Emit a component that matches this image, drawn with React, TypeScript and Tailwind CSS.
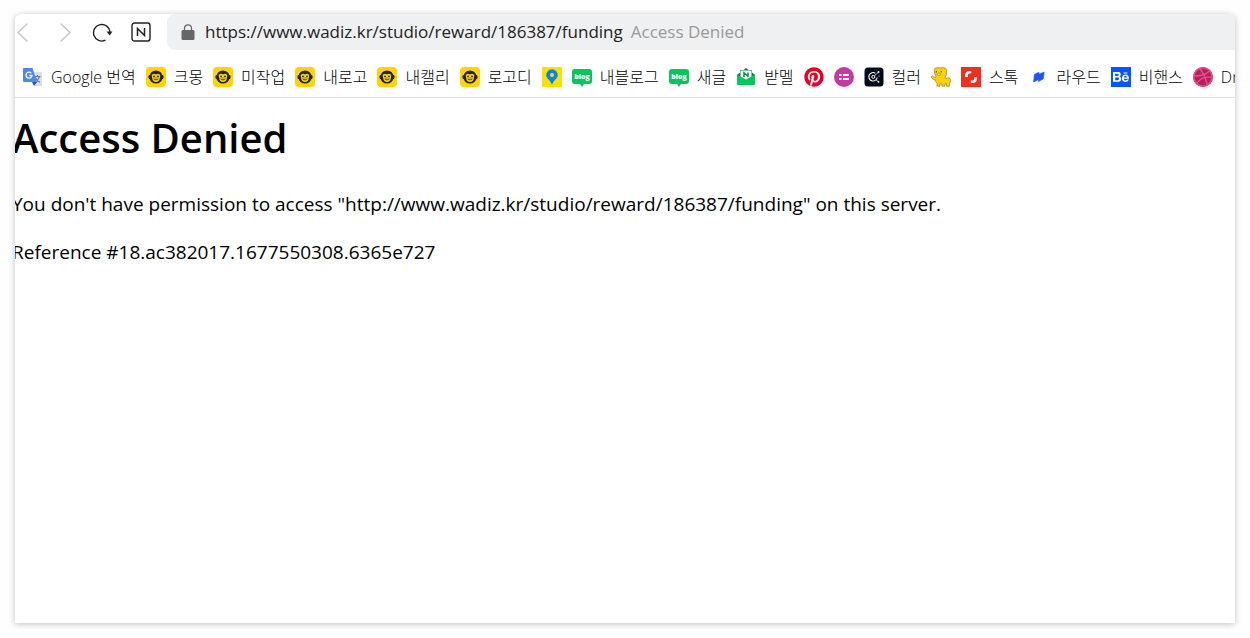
import type { ReactNode } from "react";
import { FaBehance, FaDribbble, FaPinterest } from "react-icons/fa";

interface Bookmark {
  id: string;
  title: string;
  label?: string;
  icon: ReactNode;
}

const URL = "https://www.wadiz.kr/studio/reward/186387/funding";

function TranslateIcon() {
  return (
    <svg viewBox="0 0 20 20" className="size-5">
      <path d="M8 5h10q1 0 1 1v12q0 1-1 1h-6z" fill="#dcdee0" />
      <path d="M11.5 9.5h6M14.5 8v1.5M12.5 15.5c2-1.5 3.4-3.5 3.9-6M12.5 10.5c.8 2 2.3 3.7 4.5 4.8" fill="none" stroke="#607d8b" strokeWidth="1.2" />
      <path d="M9 15h5l-3 4z" fill="#2946c9" />
      <path d="M1 1h8.5L14 15H1q-1 0-1-1V2q0-1 1-1z" fill="#4c86ee" />
      <path d="M8.3 6.2A3 3 0 1 0 9 8.5H6.2" fill="none" stroke="#fff" strokeWidth="1.3" />
    </svg>
  );
}

function MonkeyIcon() {
  return (
    <svg viewBox="0 0 20 20" className="size-5">
      <rect width="20" height="20" rx="4" fill="#ffd400" />
      <circle cx="4.5" cy="10" r="2.2" fill="#222" />
      <circle cx="15.5" cy="10" r="2.2" fill="#222" />
      <circle cx="10" cy="10" r="6.6" fill="#222" />
      <path d="M10 7.5C8 5.8 5.4 7 5.8 9.4c.1.8.5 1.2.5 2 0 2 1.7 3.5 3.7 3.5s3.7-1.5 3.7-3.5c0-.8.4-1.2.5-2C14.6 7 12 5.8 10 7.5z" fill="#ffd400" />
      <circle cx="8" cy="9.4" r="0.9" fill="#222" />
      <circle cx="12" cy="9.4" r="0.9" fill="#222" />
      <path d="M7.7 11.8q2.3 2.4 4.6 0M9.5 10.9h1" fill="none" stroke="#222" strokeWidth="0.9" />
    </svg>
  );
}

function MapIcon() {
  return (
    <svg viewBox="0 0 20 20" className="size-5">
      <rect width="20" height="20" fill="#fae100" />
      <path d="M10 2.3a5.8 5.8 0 0 0-5.8 5.8c0 3.5 3.8 4.6 5.8 9.7 2-5.1 5.8-6.2 5.8-9.7A5.8 5.8 0 0 0 10 2.3z" fill="#0a80f5" />
      <circle cx="10" cy="8" r="2" fill="#fae100" />
    </svg>
  );
}

function BlogIcon() {
  return (
    <svg viewBox="0 0 20 20" className="size-5">
      <path d="M3 2h14q3 0 3 3v9q0 3-3 3h-5l-2 3-2-3H3q-3 0-3-3V5q0-3 3-3z" fill="#03c75a" />
      <text x="10" y="11.5" textAnchor="middle" fontSize="7" fontWeight="800" fontFamily="Open Sans, sans-serif" fill="#fff">
        blog
      </text>
    </svg>
  );
}

function MailIcon() {
  return (
    <svg viewBox="0 0 20 20" className="size-5">
      <path d="M1 8l3-2.5V4q0-1 1-1h2.5L10 1l2.5 2H15q1 0 1 1v1.5L19 8v3H1z" fill="#087f3e" />
      <path d="M4.5 4.5q0-1 1-1h9q1 0 1 1V13h-11z" fill="#fff" />
      <path d="M8 10V5.8l4 3.4M12 10V5.5" fill="none" stroke="#078a43" strokeWidth="1.5" />
      <path d="M1 7.5l9 5 9-5V17q0 1-1 1H2q-1 0-1-1z" fill="#03c75a" />
    </svg>
  );
}

function PinterestIcon() {
  return (
    <span className="block size-5 rounded-full bg-white">
      <FaPinterest className="size-5 text-[#e60023]" />
    </span>
  );
}

function ListIcon() {
  return (
    <svg viewBox="0 0 20 20" className="size-5">
      <circle cx="10" cy="10" r="10" fill="#c837a0" />
      <path d="M5 8h2.5M9 8h6M5 12h2.5M9 12h6" stroke="#fff" strokeWidth="2.2" />
    </svg>
  );
}

function ColorIcon() {
  return (
    <svg viewBox="0 0 20 20" className="size-5">
      <rect x="0.5" y="0.5" width="19" height="19" rx="3.5" fill="#020b1c" />
      <path d="M11.3 6.2A4.2 4.2 0 1 0 13.2 10.5" fill="none" stroke="#fff" strokeWidth="1.1" />
      <circle cx="9.3" cy="9.9" r="1.5" fill="none" stroke="#fff" strokeWidth="1" />
      <path d="M10.5 8.8l3.5-3.3M12 12.8l2 1.8" stroke="#fff" strokeWidth="0.8" />
      <circle cx="14.5" cy="5" r="0.9" fill="#fff" />
      <circle cx="15" cy="9" r="0.6" fill="#fff" />
      <circle cx="14.5" cy="14.8" r="0.9" fill="#fff" />
    </svg>
  );
}

function HippoIcon() {
  return (
    <svg viewBox="0 0 20 20" className="size-5">
      <path
        d="M5.500.8h7.500q2.500 0 2.500 2.500v3.200q0 2-1.200 3.300l-.3 1.200c1.200.6 2.500 0 3.500-.3 2 .2 2.300 2.300 1.800 4-.3 1-.8 1.800-.8 2.500v2h-3v-2.400h-1.500v2.400h-3v-2.400H9v2.400H6v-3.200c-1.200-1-2-2-2.200-3.300C1.500 12.500.4 11 .6 9.500c.2-.9 1.300-1 1.600-.2.300.8 1.200 1.200 2.500 1l.3-1.300C3.800 8 3.300 6 3.300 3.300 3.300 1.500 4 .8 5.500.8z"
        fill="#fdd108"
        stroke="#85721d"
        strokeWidth="0.6"
      />
      <circle cx="5.3" cy="4.7" r="0.7" fill="#4d4211" />
      <circle cx="10.3" cy="4.7" r="0.7" fill="#4d4211" />
      <ellipse cx="7.7" cy="7.2" rx="1.9" ry="1.2" fill="#ffe873" stroke="#85721d" strokeWidth="0.6" />
    </svg>
  );
}

function StockIcon() {
  return (
    <svg viewBox="0 0 20 20" className="size-5">
      <rect width="20" height="20" fill="#f0301f" />
      <path d="M5.5 10V8q0-2.8 2.8-2.8h2M14.5 10v2q0 2.8-2.8 2.8H9.700" fill="none" stroke="#fff" strokeWidth="2.6" />
    </svg>
  );
}

function LoudIcon() {
  return (
    <svg viewBox="0 0 20 20" className="size-5">
      <path d="M5.5 7.2L10 5.200v2L15.200 5 14.200 12l-4.700 2.600.2-2L4.500 15z" fill="#1f55f5" stroke="#1f55f5" strokeWidth="0.6" />
    </svg>
  );
}

function BehanceIcon() {
  return (
    <span className="flex size-5 items-center justify-center bg-[#0057ff]">
      <FaBehance className="size-4 text-white" />
    </span>
  );
}

function DribbbleIcon() {
  return (
    <span className="block size-5 rounded-full bg-[#b2215a]">
      <FaDribbble className="size-5 text-[#ea4c89]" />
    </span>
  );
}

const BOOKMARKS: Bookmark[] = [
  { id: "translate", title: "Google 번역", label: "Google 번역", icon: <TranslateIcon /> },
  { id: "kmong", title: "크몽", label: "크몽", icon: <MonkeyIcon /> },
  { id: "work", title: "미작업", label: "미작업", icon: <MonkeyIcon /> },
  { id: "logo", title: "내로고", label: "내로고", icon: <MonkeyIcon /> },
  { id: "calli", title: "내캘리", label: "내캘리", icon: <MonkeyIcon /> },
  { id: "logodi", title: "로고디", label: "로고디", icon: <MonkeyIcon /> },
  { id: "map", title: "Map", icon: <MapIcon /> },
  { id: "my-blog", title: "내블로그", label: "내블로그", icon: <BlogIcon /> },
  { id: "new-post", title: "새글", label: "새글", icon: <BlogIcon /> },
  { id: "mail", title: "받멜", label: "받멜", icon: <MailIcon /> },
  { id: "pinterest", title: "Pinterest", icon: <PinterestIcon /> },
  { id: "list", title: "List", icon: <ListIcon /> },
  { id: "color", title: "컬러", label: "컬러", icon: <ColorIcon /> },
  { id: "hippo", title: "Hippo", icon: <HippoIcon /> },
  { id: "stock", title: "스톡", label: "스톡", icon: <StockIcon /> },
  { id: "loud", title: "라우드", label: "라우드", icon: <LoudIcon /> },
  { id: "behance", title: "비핸스", label: "비핸스", icon: <BehanceIcon /> },
  { id: "dribbble", title: "Dribbble", label: "Dribbble", icon: <DribbbleIcon /> },
];

function Toolbar() {
  return (
    <div className="flex h-9 items-center">
      <button type="button" aria-label="Back" className="text-[#c0c2c4]">
        <svg viewBox="0 0 16 20" className="h-5 w-4" fill="none" stroke="currentColor" strokeWidth="1.3">
          <path d="M12.5 1.5L3 10.5l9.5 9" />
        </svg>
      </button>
      <button type="button" aria-label="Forward" className="ml-7 text-[#c0c2c4]">
        <svg viewBox="0 0 16 20" className="h-5 w-4" fill="none" stroke="currentColor" strokeWidth="1.3">
          <path d="M1.5 1.5l9.5 9-9.5 9" />
        </svg>
      </button>
      <button type="button" aria-label="Reload" className="ml-4 text-[#222]">
        <svg viewBox="0 0 24 20" className="h-5 w-6" fill="none" stroke="currentColor" strokeWidth="1.4">
          <path d="M14.5 18.2A8.3 8.3 0 1 1 19.1 10" />
          <path d="M15.5 9.5h6L18.7 13.5z" fill="currentColor" stroke="none" />
        </svg>
      </button>
      <button type="button" aria-label="Naver" className="ml-4 text-[#222]">
        <svg viewBox="0 0 20 20" className="size-5" fill="none" stroke="currentColor">
          <rect x="1" y="1" width="18" height="18" rx="2.5" strokeWidth="1.4" />
          <path d="M6.5 14V6.5l7 7V6" strokeWidth="1.5" />
        </svg>
      </button>
      <div className="ml-4 flex h-9 min-w-0 flex-1 items-center rounded-l-lg bg-[#eff0f2] pl-3.5">
        <svg viewBox="0 0 14 16" className="h-4 w-3.5 shrink-0">
          <rect x="0.5" y="6" width="13" height="10" rx="1.5" fill="#666" />
          <path d="M3.5 7V4.3a3.5 3.5 0 0 1 7 0V7" fill="none" stroke="#666" strokeWidth="1.3" />
        </svg>
        <input
          type="text"
          aria-label="Address"
          defaultValue={URL}
          className="ml-2.5 field-sizing-content min-w-0 bg-transparent text-[17px] text-[#222] outline-none"
        />
        <span className="ml-2 whitespace-nowrap text-[17px] text-[#999]">Access Denied</span>
      </div>
    </div>
  );
}

function BookmarksBar() {
  return (
    <nav className="flex h-12 items-center gap-2.5 overflow-hidden border-b border-[#dcdee0] pt-1.5 pl-2">
      {BOOKMARKS.map((b) => (
        <a key={b.id} href="#" title={b.title} className="flex shrink-0 items-center gap-2">
          {b.icon}
          {b.label && <span className="whitespace-nowrap text-base/5 font-light">{b.label}</span>}
        </a>
      ))}
    </nav>
  );
}

export default function App() {
  return (
    <div className="flex min-h-screen flex-col bg-[#fefefe] px-[15px] pt-[14px] pb-[15px] font-['Open_Sans','Noto_Sans_CJK_KR',sans-serif] text-black">
      <div className="flex flex-1 flex-col overflow-hidden rounded-t-md bg-white shadow-[0_1px_6px_rgba(0,0,0,0.25)]">
        <Toolbar />
        <BookmarksBar />
        <main className="-ml-[3px] pt-3">
          <h1 className="text-[40px]/14 font-semibold">Access Denied</h1>
          <p className="mt-6 text-[19px]/7">
            You don't have permission to access "http://www.wadiz.kr/studio/reward/186387/funding" on this server.
          </p>
          <p className="mt-5 text-[19px]/7">Reference #18.ac382017.1677550308.6365e727</p>
        </main>
      </div>
    </div>
  );
}
